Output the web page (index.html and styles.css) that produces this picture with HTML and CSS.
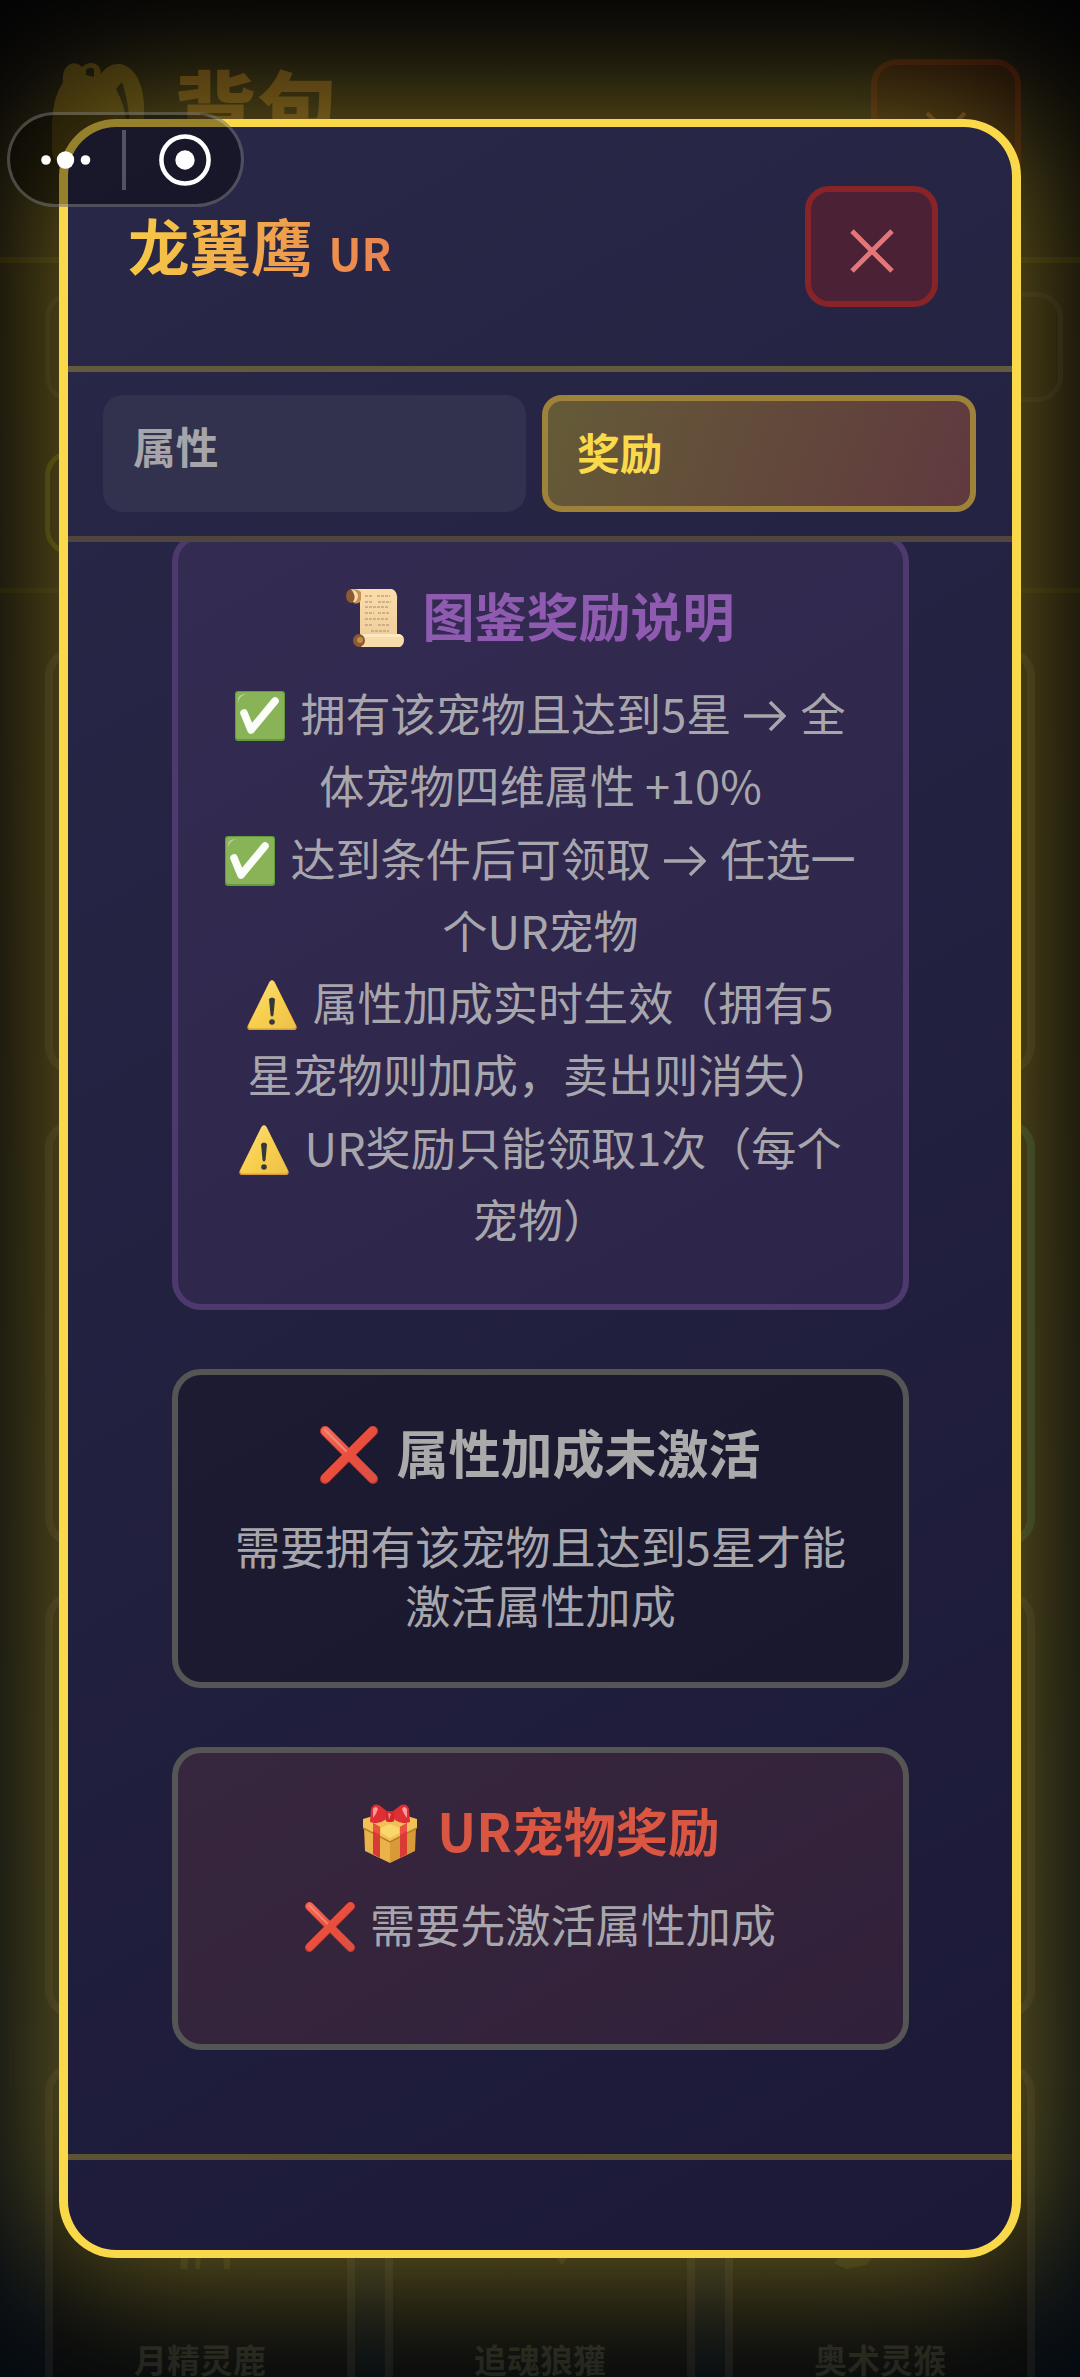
FILE: index.html
```html
<!DOCTYPE html>
<html lang="zh-CN">
<head>
<meta charset="utf-8">
<title>背包</title>
<link rel="stylesheet" href="styles.css">
</head>
<body>
<svg class="defs" width="0" height="0" aria-hidden="true">
  <defs>
    <linearGradient id="paper" x1="0" y1="0" x2="0" y2="1"><stop offset="0" stop-color="#fbdcaa"/><stop offset="1" stop-color="#f0cf9c"/></linearGradient>
    <linearGradient id="warn" x1="0" y1="0" x2="1" y2="1"><stop offset="0" stop-color="#fbe08a"/><stop offset=".5" stop-color="#f8d04e"/><stop offset="1" stop-color="#edc04a"/></linearGradient>
    <linearGradient id="red" x1="0" y1="0" x2="1" y2="1"><stop offset="0" stop-color="#f26a55"/><stop offset=".5" stop-color="#ea4e3c"/><stop offset="1" stop-color="#dd5044"/></linearGradient>
    <symbol id="i-scroll" viewBox="0 0 58 58">
      <ellipse cx="5.500" cy="7" rx="5.500" ry="7" fill="#8a5a30"/>
      <path d="M5 0h41q6 2 5 12v37H14V13H7q4-6-2-13z" fill="url(#paper)"/>
      <path d="M5 0q7 2 7 7t-5 7q7 2 8-4V3q-3-3-10-3z" fill="#c49058"/>
      <path d="M19 7h8m4 0h13M19 13h7m6 0h13M19 18h24M19 24h9m4 0h12M19 30h23M19 36h8m5 0h12M25 42h18" stroke="#bda583" stroke-width="1.300" stroke-dasharray="3 1"/>
      <path d="M15 45h38q5 1 5 6t-4 7H15z" fill="#f8dbab"/>
      <path d="M15 45h38q3 1 4 3H15z" fill="#fde8c2"/>
      <ellipse cx="13" cy="51.500" rx="6" ry="6.500" fill="#8a5a30"/><circle cx="14" cy="51" r="3" fill="#c08a50"/>
    </symbol>
    <symbol id="i-check" viewBox="0 0 50 50">
      <rect width="50" height="50" rx="3" fill="#639a3c"/><rect x="1" y="1" width="48" height="47" rx="3" fill="#88b457"/>
      <path d="M3 9q0-6 9-6Q5 4 3 11z" fill="#c1d6a5"/>
      <path d="M9 22l7 17L40 10" fill="none" stroke="#fbfdf8" stroke-width="7.500" stroke-linecap="round" stroke-linejoin="round"/>
    </symbol>
    <symbol id="i-warn" viewBox="0 0 50 50">
      <path d="M22.500 2q2.500-3.500 5 0l22 44q1 4-3 4h-43q-4 0-3-4z" fill="#d89c38"/>
      <path d="M22.500 2q2.500-3.500 5 0l21 43q1 3.500-3 3.500h-41q-4 0-3-3.500z" fill="url(#warn)"/>
      <path d="M22 19q3-3 6 0l-1.500 16q-1.500 3-3 0z" fill="#33383b"/><circle cx="25" cy="42" r="2.800" fill="#33383b"/>
    </symbol>
    <symbol id="i-cross" viewBox="0 0 58 58">
      <path d="M5 5l48 48M53 5L5 53" stroke="#c9382c" stroke-width="10" stroke-linecap="round"/>
      <path d="M5.500 5l47 47M52.500 5l-47 47" stroke="url(#red)" stroke-width="9" stroke-linecap="round"/>
      <path d="M5 4l21 21" stroke="#f5887a" stroke-width="2" stroke-linecap="round"/>
    </symbol>
    <symbol id="i-gift" viewBox="0 0 54 60">
      <path d="M1 23l26 14v22L2 47z" fill="#eab24a"/><path d="M53 23L27 37v22l25-12z" fill="#d89a38"/>
      <path d="M0 15l27-8 27 8v9L27 38 0 24z" fill="#f2c156"/><path d="M0 24l27 14 27-14" fill="none" stroke="#b57a2c" stroke-width="1.500"/>
      <path d="M27 20l9 4v5l-9 5-9-5v-5z" fill="#fbd66c"/>
      <path d="M10 19l7 4v31l-7-4zM44 19l-7 4v31l7-4z" fill="#d83a34"/>
      <path d="M10 19l7 4v8l-7-4zM44 19l-7 4v8l7-4z" fill="#ec5146"/>
      <path d="M8 5q2-6 8-4l9 7-3 8q-7 5-15 2zM46 5q-2-6-8-4l-9 7 3 8q7 5 15 2z" fill="#df2f34"/>
      <path d="M10 5q3-4 5 0-2 6-5 9zM44 5q-3-4-5 0 2 6 5 9z" fill="#f69a97"/>
      <rect x="22.500" y="7" width="9" height="11" rx="3" fill="#d4262e"/><path d="M25 9l3 1-2 6z" fill="#f5827c"/>
    </symbol>
  </defs>
</svg>

<div class="bag">
  <header class="bag-head">
    <svg class="bag-icon" viewBox="0 0 92 100"><path d="M11 20C9 2 23-3 30 5 37-2 49 0 49 12 56 2 66 0 74 4 88 11 93 32 92 52V100H10Q0 100 0 88V60Q1 35 11 20zM34 8v5l8 2V7q-4-3-8 1zM64 27l6-7q9 28 8 56l-3-10Q74 45 64 27z"/></svg>
    <h1 class="bag-title">背包</h1>
    <span class="bag-close"><svg viewBox="0 0 42 42"><path d="M2 2l38 38M40 2L2 40"/></svg></span>
  </header>
  <div class="bag-tools"><span class="bag-filter"></span><span class="bag-sort"></span></div>
  <main class="bag-grid">
    <div class="pet"></div><div class="pet"></div><div class="pet"></div>
    <div class="pet"></div><div class="pet"></div><div class="pet rare"></div>
    <div class="pet"></div><div class="pet"></div><div class="pet"></div>
    <div class="pet named">
      <svg class="pet-art" viewBox="0 0 120 90"><path d="M46 0L40 62h7L54 0zM58 10l-3 52h5L65 0zM80 0l4 62h6V0z"/></svg><span>月精灵鹿</span></div>
    <div class="pet named">
      <svg class="pet-art" viewBox="0 0 120 90"><path d="M53 0l8 36 10 8 11 14 11-16 18-10-2-20-15 4-8-16z"/></svg><span>追魂狼獾</span></div>
    <div class="pet named">
      <svg class="pet-art" viewBox="0 0 120 90"><path d="M29 12l-4 30-11 14 12 6 20-4 10-10 15 2 18-20 4-30H29z"/></svg><span>奥术灵猴</span></div>
  </main>
</div>

<section class="dialog">
  <header class="dialog-head">
    <h2 class="dialog-title">龙翼鹰<small>UR</small></h2>
    <button class="close" aria-label="关闭"><svg viewBox="0 0 44 44"><path d="M2 2l40 40"/><path d="M42 2L2 42"/></svg></button>
  </header>
  <nav class="tabs">
    <div class="tab">属性</div>
    <div class="tab active">奖励</div>
  </nav>
  <div class="content">
    <article class="card rules">
      <h3><svg class="em big"><use href="#i-scroll"/></svg>图鉴奖励说明</h3>
      <p><svg class="em"><use href="#i-check"/></svg>拥有该宠物且达到5星 <svg class="arrow" viewBox="0 0 42 34"><path d="M0 17h40M26 3l14 14-14 14"/></svg> 全</p>
      <p>体宠物四维属性 +10%</p>
      <p><svg class="em"><use href="#i-check"/></svg>达到条件后可领取 <svg class="arrow" viewBox="0 0 42 34"><path d="M0 17h40M26 3l14 14-14 14"/></svg> 任选一</p>
      <p>个UR宠物</p>
      <p><svg class="em"><use href="#i-warn"/></svg>属性加成实时生效（拥有5</p>
      <p>星宠物则加成，卖出则消失）</p>
      <p><svg class="em"><use href="#i-warn"/></svg>UR奖励只能领取1次（每个</p>
      <p>宠物）</p>
    </article>
    <article class="card bonus">
      <h3><svg class="em big"><use href="#i-cross"/></svg>属性加成未激活</h3>
      <p>需要拥有该宠物且达到5星才能</p>
      <p>激活属性加成</p>
    </article>
    <article class="card reward">
      <h3><svg class="em gift"><use href="#i-gift"/></svg>UR宠物奖励</h3>
      <p><svg class="em"><use href="#i-cross"/></svg>需要先激活属性加成</p>
    </article>
  </div>
  <footer class="dialog-foot"></footer>
</section>

<div class="capsule">
  <svg class="more" viewBox="0 0 50 18"><circle cx="5" cy="9" r="4.800"/><circle cx="24.500" cy="9" r="8.700"/><circle cx="44.500" cy="9" r="4.800"/></svg>
  <i></i>
  <svg class="target" viewBox="0 0 52 52"><circle cx="26" cy="26" r="23.600" fill="none" stroke="#fff" stroke-width="4.500"/><circle cx="26" cy="26" r="9.700"/></svg>
</div>
</body>
</html>
```

FILE: styles.css
```css
* { box-sizing: border-box; margin: 0; padding: 0; }

body {
  position: relative;
  width: 1080px;
  height: 2377px;
  overflow: hidden;
  background: linear-gradient(#040406, #040508 40%, #050b13);
  font-family: "Noto Sans CJK SC", "Noto Sans", sans-serif;
}

.defs { position: absolute; }

/* dimmed inventory page behind the dialog */
.bag { width: 1080px; height: 2377px; overflow: hidden; }
.bag-head {
  display: flex;
  align-items: flex-start;
  height: 263px;
  padding: 59px 59px 0 52px;
  border-bottom: 6px solid #100f04;
}
.bag-icon { width: 92px; height: 100px; margin-top: 3px; fill: #2d2309; fill-rule: evenodd; }
.bag-title { margin-left: 30px; font-size: 83px; font-weight: 900; line-height: 92px; color: #3c270c; }
.bag-close {
  width: 150px;
  height: 140px;
  margin-left: auto;
  padding: 46px 0 0 48px;
  border: 6px solid #260805;
  border-radius: 26px;
  background: #100404;
}
.bag-close svg { width: 42px; height: 42px; stroke: #402011; stroke-width: 4; }
.bag-tools {
  display: flex;
  flex-direction: column;
  gap: 48px;
  height: 330px;
  padding: 29px 17px 0 45px;
  border-bottom: 5px solid #0d0c04;
}
.bag-filter, .bag-sort {
  flex: none;
  height: 110px;
  border: 5px solid rgba(255, 255, 255, .035);
  border-radius: 26px;
}
.bag-sort { width: 500px; height: 105px; border-color: #201e06; }
.bag-grid {
  display: grid;
  grid-template-columns: repeat(3, 310px);
  grid-auto-rows: 426px;
  gap: 46px 30px;
  padding: 55px 45px 0;
}
.pet {
  border: 8px solid rgba(255, 255, 255, .05);
  border-radius: 28px;
  background: rgba(10, 5, 0, .3);
}
.rare { border-color: #0a1f1f; }
.named { display: flex; flex-direction: column; align-items: center; padding-top: 135px; }
.pet-art { width: 120px; height: 90px; fill: #151811; }
.named span { margin-top: 45px; font-size: 33px; font-weight: 700; line-height: 34px; color: #1e201e; }

/* dialog */
.dialog {
  position: absolute;
  left: 59px;
  top: 119px;
  display: flex;
  flex-direction: column;
  width: 962px;
  height: 2139px;
  border: 8px solid #f9d84a;
  border-left-width: 9px;
  border-right-width: 9px;
  border-radius: 57px;
  background: linear-gradient(150deg, #2a2848, #1b1937);
  box-shadow: 0 0 146px 10px rgba(249, 216, 60, .46);
  overflow: hidden;
}
.dialog-head {
  display: flex;
  flex: none;
  align-items: flex-start;
  justify-content: space-between;
  height: 245px;
  padding: 59px 74px 0 60px;
  border-bottom: 6px solid #635a3d;
}
.dialog-title {
  margin-top: 14px;
  font-size: 61.500px;
  line-height: 90px;
  background: linear-gradient(100deg, #f7cc46, #e97f50);
  -webkit-background-clip: text;
  background-clip: text;
  color: transparent;
}
.dialog-title small { margin-left: 16px; font-size: 44px; font-weight: 700; }
.close {
  width: 133px;
  height: 121px;
  border: 6px solid #882428;
  border-radius: 24px;
  background: #4b2136;
  line-height: 0;
}
.close svg { width: 44px; height: 44px; margin-top: 9px; stroke: #e97b7d; stroke-width: 5; opacity: .96; }
.tabs {
  display: flex;
  flex: none;
  gap: 16px;
  height: 170px;
  padding: 23px 36px 24px 35px;
  border-bottom: 6px solid #50463d;
}
.tab {
  width: 423px;
  height: 117px;
  padding: 19px 30px;
  border-radius: 20px;
  background: #32314e;
  font-size: 42.700px;
  font-weight: 700;
  line-height: 62px;
  color: #a6a5aa;
}
.tab.active {
  width: 434px;
  padding-left: 29px;
  border: 6px solid #9e823a;
  background: linear-gradient(110deg, #655b37, #60393f);
  color: #fad94b;
}
.content {
  flex: 1;
  min-height: 0;
  padding: 0 104px;
  overflow: hidden;
}
.card {
  width: 737px;
  border: 6px solid #555556;
  border-radius: 29px;
  text-align: center;
  color: #a8a6ad;
  white-space: nowrap;
}
.card + .card { margin-top: 59px; }
.card h3 { font-size: 52px; line-height: 76px; }
.card p { font-size: 45.100px; line-height: 59px; }
.rules {
  height: 777px;
  margin-top: -9px;
  padding-top: 38px;
  border-color: #4d396d;
  background: linear-gradient(150deg, #332b51, #2d2549);
}
.rules h3 { margin-bottom: 24px; color: #8f5bb0; }
.rules p { line-height: 72.300px; }
.bonus { height: 319px; padding-top: 39px; background: linear-gradient(150deg, #1c1b32, #19182e); }
.bonus h3 { margin-bottom: 26px; color: #aaaaab; }
.reward { height: 303px; padding-top: 39px; background: linear-gradient(150deg, #37273e, #312039); }
.reward h3 { margin-bottom: 26px; color: #d85642; }

.em { width: 50px; height: 50px; margin-right: 15px; vertical-align: -9px; }
.em.big { width: 58px; height: 58px; margin-right: 18px; vertical-align: -10px; }
.em.gift { width: 54px; height: 60px; margin: 0 20px 0 2px; vertical-align: -12px; }
.arrow { width: 42px; height: 34px; margin: 0 4px 0 3px; vertical-align: -1px; fill: none; stroke: #a8a6ad; stroke-width: 3.400; }

.dialog-foot { flex: none; height: 96px; border-top: 6px solid #5c5336; }

/* mini-program capsule */
.capsule {
  position: absolute;
  left: 7px;
  top: 112px;
  display: flex;
  align-items: center;
  width: 237px;
  height: 95px;
  padding-left: 31px;
  border: 3px solid rgba(255, 255, 255, .24);
  border-radius: 48px;
  background: rgba(0, 0, 0, .4);
}
.capsule svg { fill: #fff; }
.more { width: 50px; height: 18px; }
.capsule i { width: 4px; height: 60px; margin: 0 33px 0 31px; background: rgba(255, 255, 255, .25); }
.target { width: 52px; height: 52px; }
```
